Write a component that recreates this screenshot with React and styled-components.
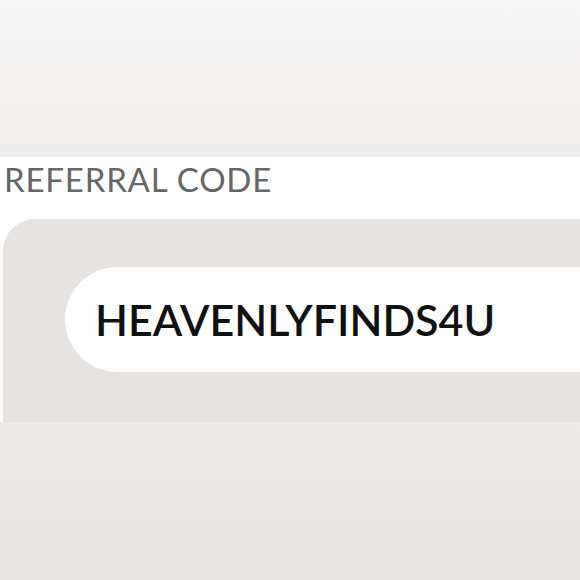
import React from "react";
import styled, { createGlobalStyle } from "styled-components";

const GlobalStyle = createGlobalStyle`
  html, body {
    margin: 0;
    padding: 0;
    background: #ffffff;
  }
  body {
    font-family: Lato, "Liberation Sans", sans-serif;
  }
`;

const Screen = styled.div`
  width: 580px;
  height: 580px;
  display: flex;
  flex-direction: column;
  overflow: hidden;
  background: #ffffff;
`;

const Haze = styled.div`
  height: ${(props) => props.height || "auto"};
  flex: ${(props) => (props.grow ? 1 : "none")};
  background: ${(props) => props.bg};
`;

const LabelBand = styled.div`
  height: 62px;
  box-sizing: border-box;
  padding: 2px 0 0 4px;
  background: #ffffff;
`;

const Label = styled.span`
  font-size: 33px;
  font-weight: 400;
  color: #666666;
  letter-spacing: 0.8px;
`;

const Panel = styled.div`
  height: 203px;
  margin-left: 3px;
  box-sizing: border-box;
  padding: 48px 0 50px 62px;
  background: #e6e3e0;
  border-top-left-radius: 32px;
  display: flex;
`;

const CodePill = styled.div`
  flex: 1;
  display: flex;
  align-items: center;
  padding-left: 30px;
  background: #ffffff;
  border-radius: 53px 0 0 53px;
`;

const Code = styled.span`
  font-size: 43px;
  font-weight: 600;
  color: #111111;
  letter-spacing: 0;
`;

export default function App() {
  return (
    <>
      <GlobalStyle />
      <Screen>
        <Haze
          height="157px"
          bg="linear-gradient(180deg, #f7f6f6 0%, #f2f1f0 45%, #eeedeb 100%)"
        />
        <LabelBand>
          <Label>REFERRAL CODE</Label>
        </LabelBand>
        <Panel>
          <CodePill>
            <Code>HEAVENLYFINDS4U</Code>
          </CodePill>
        </Panel>
        <Haze
          grow
          bg="linear-gradient(180deg, #eeecea 0%, #ebe8e5 50%, #e8e4e1 100%)"
        />
      </Screen>
    </>
  );
}
